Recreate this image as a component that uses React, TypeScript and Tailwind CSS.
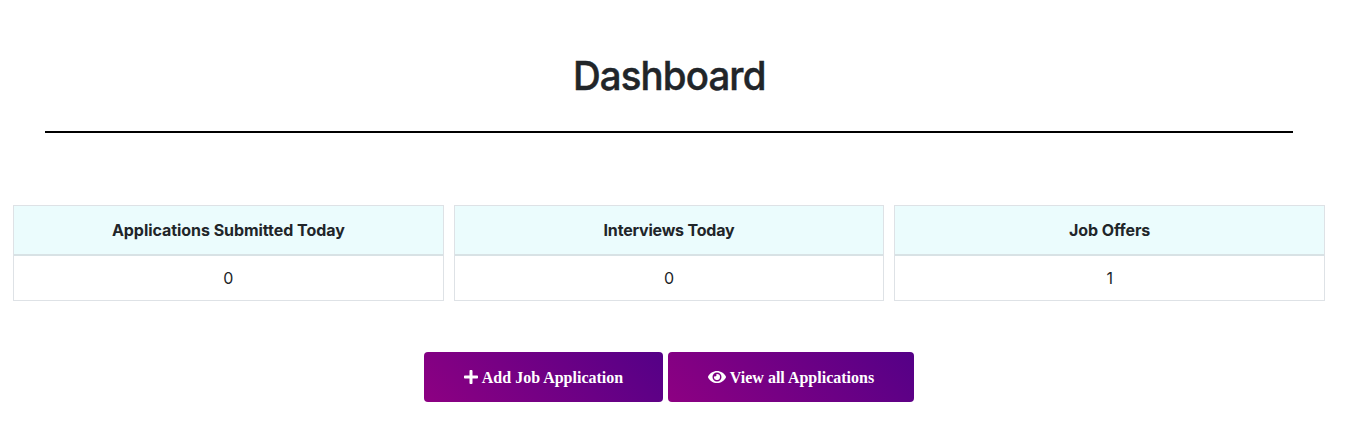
import { FaPlus, FaEye } from "react-icons/fa";

const stats = [
  { label: "Applications Submitted Today", value: 0, tracking: "tracking-[-0.05px]" },
  { label: "Interviews Today", value: 0, tracking: "tracking-[-0.2px]" },
  { label: "Job Offers", value: 1, tracking: "tracking-[-0.1px]" },
];

const button =
  "flex h-[50px] items-center justify-center gap-1 rounded bg-[linear-gradient(45deg,#8d0082,#540087)] font-['Liberation_Serif',serif] text-base font-bold text-white";

export default function App() {
  return (
    <main className="h-[426px] bg-white pt-[52px] font-[Inter,sans-serif] text-[#212529]">
      <header className="ml-[45px] flex h-[81px] w-[1248px] justify-center border-b-2 border-black">
        <h1 className="scale-x-[0.96] text-[40px] leading-[48px] font-medium tracking-[-0.9px] [-webkit-text-stroke:0.5px_#212529]">
          Dashboard
        </h1>
      </header>
      <section className="mt-[72px] ml-[13px] grid w-[1312px] grid-cols-3 gap-[10px] text-center text-base">
        {stats.map((s) => (
          <div key={s.label} className="border border-[#dee2e6]">
            <div className={`flex h-[50px] items-center justify-center border-b-2 border-[#d8e2e5] bg-[#ebfcfd] font-bold ${s.tracking}`}>
              {s.label}
            </div>
            <div className="flex h-[44px] items-center justify-center">{s.value}</div>
          </div>
        ))}
      </section>
      <nav className="mt-[51px] ml-[424px] flex gap-[5px]">
        <button className={`${button} w-[239px]`}>
          <FaPlus className="h-4 w-[14px]" />
          <span className="pt-0.5">Add Job Application</span>
        </button>
        <button className={`${button} w-[246px]`}>
          <FaEye className="h-[18px] w-[18px]" />
          <span className="pt-0.5">View all Applications</span>
        </button>
      </nav>
    </main>
  );
}
